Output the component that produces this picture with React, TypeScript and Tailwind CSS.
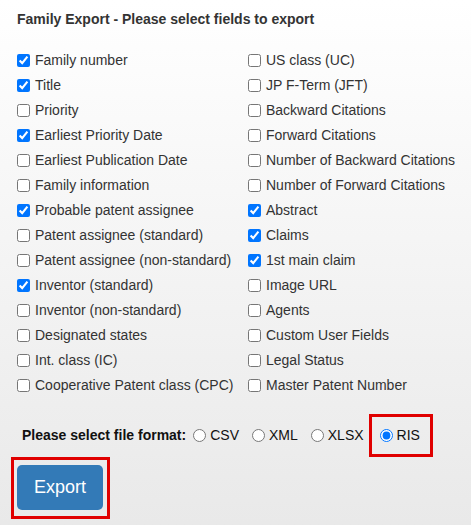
import { useState } from 'react';

const leftFields: [string, boolean][] = [
  ['Family number', true],
  ['Title', true],
  ['Priority', false],
  ['Earliest Priority Date', true],
  ['Earliest Publication Date', false],
  ['Family information', false],
  ['Probable patent assignee', true],
  ['Patent assignee (standard)', false],
  ['Patent assignee (non-standard)', false],
  ['Inventor (standard)', true],
  ['Inventor (non-standard)', false],
  ['Designated states', false],
  ['Int. class (IC)', false],
  ['Cooperative Patent class (CPC)', false],
];

const rightFields: [string, boolean][] = [
  ['US class (UC)', false],
  ['JP F-Term (JFT)', false],
  ['Backward Citations', false],
  ['Forward Citations', false],
  ['Number of Backward Citations', false],
  ['Number of Forward Citations', false],
  ['Abstract', true],
  ['Claims', true],
  ['1st main claim', true],
  ['Image URL', false],
  ['Agents', false],
  ['Custom User Fields', false],
  ['Legal Status', false],
  ['Master Patent Number', false],
];

const formats = ['CSV', 'XML', 'XLSX'];

function FieldRow({ label, checked }: { label: string; checked: boolean }) {
  return (
    <label className="flex h-[25px] items-center">
      <input
        type="checkbox"
        defaultChecked={checked}
        className="m-0 ml-[4px] mr-[5px] h-[13px] w-[13px]"
      />
      <span>{label}</span>
    </label>
  );
}

export default function App() {
  const [format, setFormat] = useState('RIS');

  return (
    <div
      className="h-[525px] w-[471px] bg-gradient-to-b from-white to-[#e9e9e9] pt-[10px] text-[14px] text-[#333]"
      style={{ fontFamily: '"Liberation Sans", Arial, sans-serif' }}
    >
      <h2 className="pl-[17px] text-[14px] font-bold leading-[18px]">
        Family Export - Please select fields to export
      </h2>

      <div className="mt-[20px] grid grid-cols-[231px_1fr] pl-[13px]">
        <div>
          {leftFields.map(([l, c]) => (
            <FieldRow key={l} label={l} checked={c} />
          ))}
        </div>
        <div>
          {rightFields.map(([l, c]) => (
            <FieldRow key={l} label={l} checked={c} />
          ))}
        </div>
      </div>

      <div className="mt-[16px] flex items-center pl-[22px] text-[#111]">
        <span className="mr-[7px] font-bold">Please select file format:</span>
        {formats.map((f) => (
          <label key={f} className="mr-[13px] flex items-center">
            <input
              type="radio"
              name="fmt"
              checked={format === f}
              onChange={() => setFormat(f)}
              className="m-0 mr-[4px] h-[13px] w-[13px]"
            />
            <span>{f}</span>
          </label>
        ))}
        <label className="-ml-[8px] flex h-[43px] items-center border-[3px] border-[#e00000] pl-[8px] pr-[10px]">
          <input
            type="radio"
            name="fmt"
            checked={format === 'RIS'}
            onChange={() => setFormat('RIS')}
            className="m-0 mr-[4px] h-[13px] w-[13px]"
          />
          <span>RIS</span>
        </label>
      </div>

      <div className="ml-[11px] inline-block border-[3px] border-[#e00000] pb-[6px] pl-[3px] pr-[4px] pt-[5px]">
        <button
          type="button"
          className="h-[45px] w-[86px] rounded-[5px] bg-[#337ab7] text-[18px] text-white"
        >
          Export
        </button>
      </div>
    </div>
  );
}
